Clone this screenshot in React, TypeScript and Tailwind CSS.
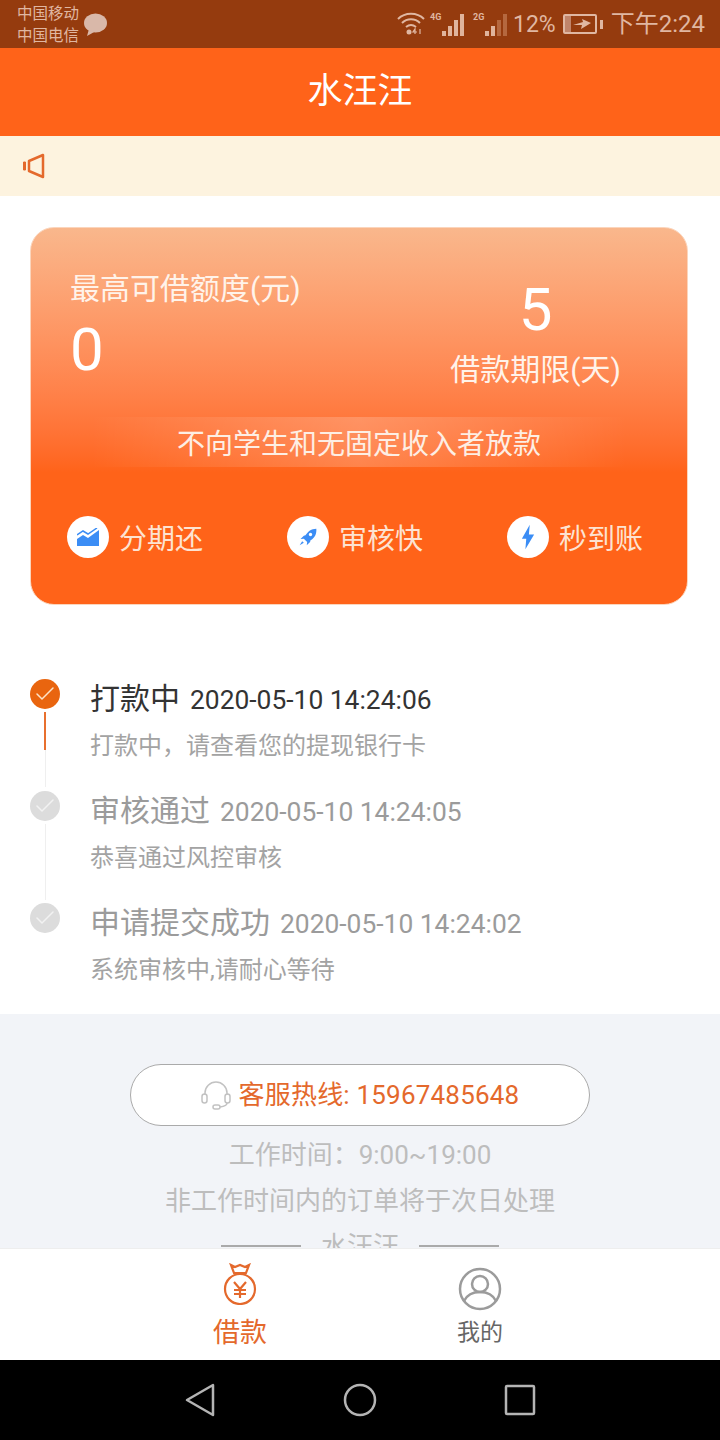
import { Check } from 'lucide-react';

const cjk = "font-['Roboto','Noto_Sans_CJK_SC',sans-serif]";

function SignalBars({ lit }: { lit: number }) {
  const heights = [5, 10, 16, 22];
  return (
    <div className="flex items-end gap-[2px] h-[22px]">
      {heights.map((h, i) => (
        <div
          key={i}
          className={`w-[4px] ${i < lit ? 'bg-[#e0b49c]' : 'bg-[#b5683f]'}`}
          style={{ height: h }}
        />
      ))}
    </div>
  );
}

function StatusBar() {
  return (
    <div className="h-[48px] shrink-0 bg-[#953b0e] flex items-center justify-between pl-[17px] pr-[15px] text-[#e0b7a2]">
      <div className="flex items-center">
        <div className="text-[15.5px] leading-[22px] mt-[1px]">
          <div>中国移动</div>
          <div>中国电信</div>
        </div>
        <svg width="24" height="24" viewBox="0 0 24 24" className="ml-[4px] mt-[2px]">
          <ellipse cx="12.500" cy="10" rx="11.500" ry="9.500" fill="#d9b8a9" />
          <path d="M6 16 L4 23 L13 18Z" fill="#d9b8a9" />
        </svg>
      </div>
      <div className="flex items-center">
        <div className="relative w-[28px] h-[24px]">
          <svg width="28" height="24" viewBox="0 0 28 24" fill="none" stroke="#e0b7a2" strokeWidth="2">
            <path d="M1 7C8 0 20 0 27 7" />
            <path d="M5 11c5-5 13-5 18 0" />
            <path d="M9 15c3-2.500 7-2.500 10 0" />
            <circle cx="12" cy="20" r="2.500" fill="#e0b7a2" stroke="none" />
            <path d="M18 22v-5l-2 3h4M23 17v5" strokeWidth="1.200" />
          </svg>
        </div>
        <div className="relative flex items-end ml-[5px] pl-[12px] h-[24px]">
          <span className="absolute left-0 top-[0px] text-[9px] leading-[10px] font-bold">4G</span>
          <SignalBars lit={4} />
        </div>
        <div className="relative flex items-end ml-[9px] pl-[12px] h-[24px]">
          <span className="absolute left-0 top-[0px] text-[9px] leading-[10px] font-bold">2G</span>
          <SignalBars lit={2} />
        </div>
        <span className="text-[23px] leading-none ml-[6px]">12%</span>
        <div className="ml-[7px] w-[34px] h-[20px] border-2 border-[#e0b7a2] rounded-[2px] flex items-center">
          <div className="w-[6px] h-full bg-[#c0846a]" />
          <svg width="20" height="12" viewBox="0 0 20 12" className="ml-[1px]">
            <path d="M1 7 L11 4 L10 1 L19 5 L9 11 L10 7Z" fill="#e0b7a2" />
          </svg>
        </div>
        <div className="w-[3px] h-[9px] bg-[#e0b7a2] ml-[3px]" />
        <span className="text-[24px] leading-none ml-[8px]">下午2:24</span>
      </div>
    </div>
  );
}

function Feature({ label, children }: { label: string; children: React.ReactNode }) {
  return (
    <div className="flex items-center gap-[10px] w-[220px] shrink-0">
      <div className="w-[42px] h-[42px] shrink-0 rounded-full bg-white flex items-center justify-center">{children}</div>
      <span className="text-[28px] leading-none mt-[6px] text-[#fde3d2]">{label}</span>
    </div>
  );
}

function LoanCard() {
  return (
    <div className="ml-[30px] mr-[32px] mt-[31px] h-[378px] shrink-0 rounded-[24px] border border-[#fbd5bc] bg-gradient-to-b from-[#f9b78c] via-[#ff6319] via-65% to-[#ff6319] flex flex-col text-white">
      <div className="flex h-[182px]">
        <div className="w-[353px] shrink-0 pl-[39px] pt-[43px]">
          <div className="text-[30px] leading-[36px] text-[#fff3ea]">最高可借额度(元)</div>
          <div className="text-[60px] leading-[70px] font-['Roboto',sans-serif] mt-[8px]">0</div>
        </div>
        <div className="flex-1 flex flex-col items-center pt-[47px]">
          <div className="text-[60px] leading-[70px] font-['Roboto',sans-serif]">5</div>
          <div className="text-[30px] leading-[36px] text-[#fff3ea] mt-[7px] whitespace-nowrap">借款期限(天)</div>
        </div>
      </div>
      <div className="mt-[7px] h-[50px] pt-[6px] mx-[60px] flex items-center justify-center text-[28px] text-[#fdeee4] bg-gradient-to-r from-transparent via-white/20 to-transparent">
        不向学生和无固定收入者放款
      </div>
      <div className="flex pl-[36px] mt-[49px]">
        <Feature label="分期还">
          <svg width="22" height="18" viewBox="0 0 22 18">
            <path d="M0 18V11l6-4 5 3 11-8v16Z" fill="#3b8df5" />
            <path d="M0 7l6-4 5 3 9-6" fill="none" stroke="#3b8df5" strokeWidth="1.500" />
          </svg>
        </Feature>
        <Feature label="审核快">
          <svg width="20" height="20" viewBox="0 0 24 24" fill="#3b8df5">
            <path d="M22 2c-6 .2-10 3-13 8l-2 .5-4 4 4-.5 4 4-.5 4 4-4 .5-2c5-3 7.500-7.500 7-14Z" />
            <path d="M5 17l2 2-5 3Z" />
            <circle cx="15" cy="9" r="2" fill="#fff" />
          </svg>
        </Feature>
        <Feature label="秒到账">
          <svg width="14" height="26" viewBox="0 0 16 28">
            <path d="M10 0 1 16h5L5 28l10-17H9Z" fill="#3b8df5" />
          </svg>
        </Feature>
      </div>
    </div>
  );
}

type Step = { title: string; time: string; desc: string; line?: 'partial' | 'plain' };

const steps: Step[] = [
  { title: '打款中', time: '2020-05-10 14:24:06', desc: '打款中，请查看您的提现银行卡', line: 'partial' },
  { title: '审核通过', time: '2020-05-10 14:24:05', desc: '恭喜通过风控审核', line: 'plain' },
  { title: '申请提交成功', time: '2020-05-10 14:24:02', desc: '系统审核中,请耐心等待' },
];

function Timeline() {
  return (
    <div className="px-[30px] pt-[74px] shrink-0">
      {steps.map((s, i) => (
        <div key={s.title} className="flex h-[112px]">
          <div className="w-[30px] flex flex-col items-center">
            <div
              className={`w-[30px] h-[30px] rounded-full flex items-center justify-center ${
                i === 0 ? 'bg-[#e9650f]' : 'bg-[#dcdcdc]'
              }`}
            >
              <Check size={24} strokeWidth={1.5} color={i === 0 ? '#fde3c8' : '#f2f2f2'} />
            </div>
            {s.line === 'partial' && (
              <div className="flex-1 flex flex-col items-center mt-[3px]">
                <div className="w-[2px] h-[38px] bg-[#e8702f]" />
                <div className="w-px h-[37px] bg-[#efefef]" />
              </div>
            )}
            {s.line === 'plain' && <div className="w-px h-[76px] bg-[#efefef] mt-[3px]" />}
          </div>
          <div className="ml-[30px] mt-[2px]">
            <div className={`flex items-baseline h-[36px] ${i === 0 ? 'text-[#333333]' : 'text-[#9b9b9b]'}`}>
              <span className="text-[30px] leading-[36px]">{s.title}</span>
              <span className="text-[26.4px] leading-[36px] ml-[10px]">{s.time}</span>
            </div>
            <div className="text-[24px] leading-[30px] mt-[14px] text-[#a3a3a3]">{s.desc}</div>
          </div>
        </div>
      ))}
    </div>
  );
}

function ServiceFooter() {
  return (
    <div className="mt-[-1px] bg-[#f2f4f8] flex-1 flex flex-col items-center pt-[50px] overflow-hidden">
      <div className="w-[460px] h-[62px] shrink-0 rounded-full bg-white border border-[#aaaaaa] flex items-center justify-center">
        <svg width="30" height="30" viewBox="0 0 30 30" fill="none" stroke="#c2c2c2" strokeWidth="1.500">
          <path d="M4 15v-2C4 7 9 2 15 2s11 5 11 11v2" />
          <rect x="1" y="14" width="5" height="9" rx="2.500" />
          <rect x="24" y="14" width="5" height="9" rx="2.500" />
          <path d="M26 23c0 2-3 3.500-7 4" />
          <rect x="12" y="25" width="7" height="4" rx="2" />
        </svg>
        <span className="ml-[8px] text-[26px] leading-none tracking-[0.2px] text-[#e4692c]">客服热线: 15967485648</span>
      </div>
      <div className="text-[26px] leading-[34px] shrink-0 text-[#bdbdbd] mt-[12px]">工作时间：9:00~19:00</div>
      <div className="text-[26px] leading-[34px] shrink-0 text-[#bdbdbd] mt-[12px]">非工作时间内的订单将于次日处理</div>
      <div className="flex items-center shrink-0 mt-[11px] text-[26px] leading-[34px] text-[#bdbdbd]">
        <div className="w-[80px] h-[2px] bg-[#aaaaaa]" />
        <span className="mx-[20px]">水汪汪</span>
        <div className="w-[80px] h-[2px] bg-[#aaaaaa]" />
      </div>
    </div>
  );
}

function TabBar() {
  return (
    <div className="h-[112px] shrink-0 bg-white border-t border-[#eeeeee] flex justify-center relative z-10">
      <div className="w-[240px] flex flex-col items-center pt-[14px]">
        <svg width="34" height="42" viewBox="0 0 34 42" fill="none" stroke="#e4692c" strokeWidth="2.200">
          <path d="M8 2l4 2 5-2 5 2 4-2-3 8H11Z" />
          <circle cx="17" cy="26" r="15" />
          <path d="M11 19l6 7 6-7M17 26v9M11 27h12M11 31h12" />
        </svg>
        <span className="text-[27px] leading-[30px] text-[#e4692c] mt-[13px]">借款</span>
      </div>
      <div className="w-[240px] flex flex-col items-center pt-[18px]">
        <svg width="44" height="44" viewBox="0 0 44 44" fill="none" stroke="#9b9b9b" strokeWidth="2.500">
          <circle cx="22" cy="22" r="20" />
          <circle cx="22" cy="17" r="8" />
          <path d="M6 34c3-6 9-9 16-9s13 3 16 9" />
        </svg>
        <span className="text-[23px] leading-[28px] text-[#666666] mt-[8px]">我的</span>
      </div>
    </div>
  );
}

function NavBar() {
  return (
    <div className="h-[80px] shrink-0 bg-black flex items-center justify-center gap-[127px]">
      <svg width="32" height="34" viewBox="0 0 32 34" fill="none" stroke="#b4b4b4" strokeWidth="2.500" strokeLinejoin="round">
        <path d="M29 2v30L3 17Z" />
      </svg>
      <svg width="34" height="34" viewBox="0 0 34 34" fill="none" stroke="#b4b4b4" strokeWidth="2.500">
        <circle cx="17" cy="17" r="15" />
      </svg>
      <svg width="32" height="32" viewBox="0 0 32 32" fill="none" stroke="#b4b4b4" strokeWidth="2.500" strokeLinejoin="round">
        <rect x="2" y="2" width="28" height="28" rx="1" />
      </svg>
    </div>
  );
}

export default function App() {
  return (
    <div className={`w-[720px] h-[1440px] flex flex-col bg-white overflow-hidden ${cjk}`}>
      <StatusBar />
      <div className="h-[88px] shrink-0 bg-[#ff6319] flex items-center justify-center text-white text-[35px]">水汪汪</div>
      <div className="h-[60px] shrink-0 bg-[#fdf3df] flex items-center pl-[23px]">
        <svg width="22" height="26" viewBox="0 0 22 26" fill="none" stroke="#e4692c" strokeWidth="2.500" strokeLinejoin="round">
          <path d="M20 2v22L6 18V8Z" />
          <rect x="0.500" y="9" width="2" height="8" fill="#e4692c" strokeWidth="1" />
        </svg>
      </div>
      <div className="flex-1 flex flex-col overflow-hidden">
        <LoanCard />
        <Timeline />
        <ServiceFooter />
      </div>
      <TabBar />
      <NavBar />
    </div>
  );
}
